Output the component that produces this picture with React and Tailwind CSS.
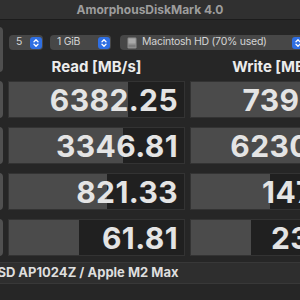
import React from 'react';

const rows = [
  { read: '6382.25', readBar: 68, write: '7390.71', writeBar: 72 },
  { read: '3346.81', readBar: 65, write: '6230.48', writeBar: 68 },
  { read: '821.33', readBar: 56, write: '147.96', writeBar: 45 },
  { read: '61.81', readBar: 40, write: '23.54', writeBar: 34 },
];

function Stepper() {
  return (
    <div className="flex h-[12px] w-[12px] items-center justify-center rounded-[3px] bg-[#2f6fe3]">
      <svg width="8" height="10" viewBox="0 0 8 10" fill="none" stroke="#ffffff" strokeWidth="1.3" strokeLinecap="round" strokeLinejoin="round">
        <path d="M2 3.8 L4 1.8 L6 3.8" />
        <path d="M2 6.2 L4 8.2 L6 6.2" />
      </svg>
    </div>
  );
}

function Select({ width, children }) {
  return (
    <div className={`flex h-[15px] items-center justify-between rounded-[4px] bg-[#474747] pl-[7px] pr-[1px] ${width}`}>
      <div className="flex items-center gap-[5px] text-[10.5px] leading-none tracking-[-0.25px] text-[#d4d4d4]">{children}</div>
      <Stepper />
    </div>
  );
}

function DriveIcon() {
  return (
    <svg width="10" height="12" viewBox="0 0 10 12">
      <rect x="0.5" y="0.5" width="9" height="11" rx="1.2" fill="#8d8d8d" />
      <rect x="1.5" y="1.5" width="7" height="5" rx="0.6" fill="#a9a9a9" />
      <rect x="1.5" y="8.5" width="7" height="1" fill="#6f6f6f" />
    </svg>
  );
}

function Cell({ value, bar }) {
  return (
    <div className="relative flex h-[37px] w-[177px] items-center justify-end overflow-hidden border border-[#333333] bg-[#202020] pr-[6px]">
      <div className="absolute inset-y-0 left-0 bg-[#4b4b4b]" style={{ width: `${bar}%` }} />
      <span className="relative text-[30px] font-bold leading-none tracking-[0.4px] text-[#e4e4e4]">{value}</span>
    </div>
  );
}

export default function App() {
  return (
    <div className="h-[300px] w-[300px] overflow-hidden bg-[#262626]" style={{ fontFamily: 'Inter, "Noto Sans", sans-serif' }}>
      {/* Title bar */}
      <div className="flex h-[20px] items-center justify-center border-b border-[#1c1c1c] bg-[#303030] text-[12px] font-bold text-[#9d9d9d]">
        AmorphousDiskMark 4.0
      </div>

      <div className="-ml-[72px] flex w-[440px] flex-col pt-[7px]">
        {/* Controls + headers */}
        <div className="flex gap-[5px]">
          <div className="h-[45px] w-[75px] shrink-0 rounded-[4px] bg-[#4f4f4f]" />
          <div className="flex flex-col">
            <div className="mt-[8px] flex items-center">
              <div className="ml-[1px]">
                <Select width="w-[34px]">5</Select>
              </div>
              <div className="ml-[7px]">
                <Select width="w-[61px]">1 GiB</Select>
              </div>
              <div className="ml-[9px]">
                <Select width="w-[185px]">
                  <DriveIcon />
                  <span>Macintosh HD (70% used)</span>
                </Select>
              </div>
            </div>
            <div className="mt-[7px] flex h-[20px] gap-[5px]">
              <div className="flex w-[177px] items-center justify-center text-[15px] font-bold text-[#ececec]">Read [MB/s]</div>
              <div className="flex w-[177px] items-center justify-center text-[15px] font-bold text-[#ececec]">Write [MB/s]</div>
            </div>
          </div>
        </div>

        {/* Result rows */}
        <div className="mt-[4px] flex flex-col gap-[9px]">
          {rows.map((r, i) => (
            <div key={i} className="flex gap-[5px]">
              <div className="h-[37px] w-[75px] shrink-0 rounded-[4px] bg-[#505050]" />
              <Cell value={r.read} bar={r.readBar} />
              <Cell value={r.write} bar={r.writeBar} />
            </div>
          ))}
        </div>

        {/* Device info */}
        <div className="mt-[6px] flex h-[22px] items-center border-y border-[#383838] bg-[#2e2e2e] pl-[16px] text-[13px] font-bold text-[#dedede]">
          APPLE SSD AP1024Z / Apple M2 Max
        </div>
      </div>
    </div>
  );
}
